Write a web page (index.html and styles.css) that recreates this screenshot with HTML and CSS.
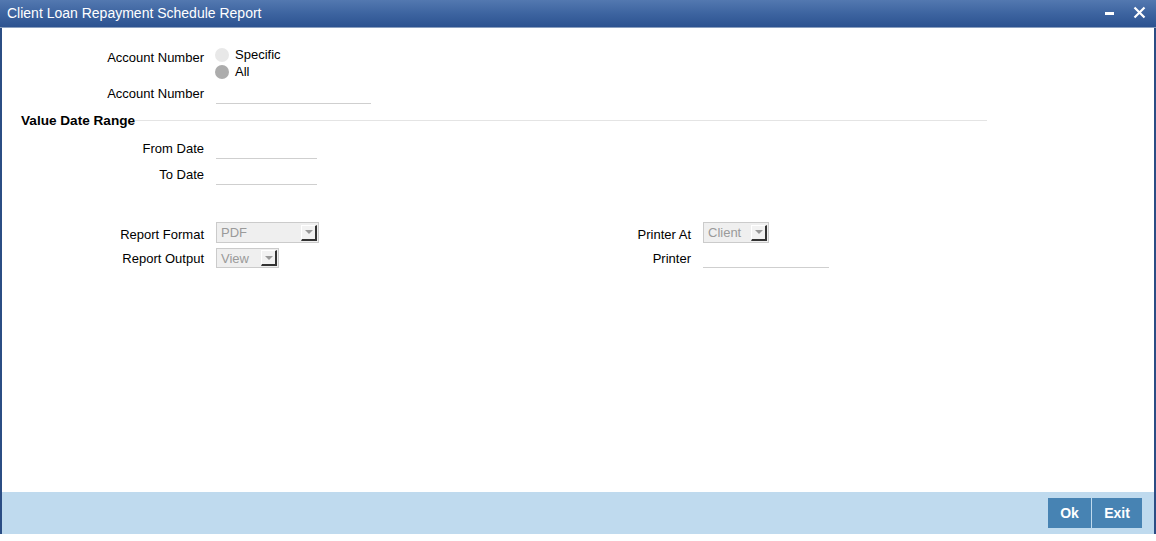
FILE: index.html
```html
<!DOCTYPE html>
<html>
<head>
<meta charset="utf-8">
<link rel="stylesheet" href="styles.css">
</head>
<body>
<div class="window">
  <div class="titlebar">
    <span class="title">Client Loan Repayment Schedule Report</span>
    <div class="tools">
      <svg class="ico" width="12" height="12" viewBox="0 0 12 12"><rect x="1" y="5" width="9" height="3" fill="#fff"/></svg>
      <svg class="ico" width="13" height="13" viewBox="0 0 13 13"><path d="M1.5 1.5 L11.5 11.5 M11.5 1.5 L1.5 11.5" stroke="#fff" stroke-width="2.2"/></svg>
    </div>
  </div>
  <div class="body">
    <div class="row r-radio">
      <label class="lbl lbl-radio">Account Number</label>
      <div class="radios">
        <div class="opt"><span class="radio"></span><span>Specific</span></div>
        <div class="opt"><span class="radio on"></span><span>All</span></div>
      </div>
    </div>
    <div class="row r-acc">
      <label class="lbl">Account Number</label>
      <div class="input w155"></div>
    </div>
    <div class="section">
      <span class="sec-title">Value Date Range</span>
      <span class="sec-line"></span>
    </div>
    <div class="row r-from">
      <label class="lbl">From Date</label>
      <div class="input w101"></div>
    </div>
    <div class="row r-to">
      <label class="lbl">To Date</label>
      <div class="input w101"></div>
    </div>
    <div class="cols">
      <div class="col left">
        <div class="row r-sel1">
          <label class="lbl">Report Format</label>
          <div class="select s103"><span class="val">PDF</span><span class="arrow"><i></i></span></div>
        </div>
        <div class="row r-sel2">
          <label class="lbl">Report Output</label>
          <div class="select s63"><span class="val">View</span><span class="arrow"><i></i></span></div>
        </div>
      </div>
      <div class="col right">
        <div class="row r-sel1">
          <label class="lbl">Printer At</label>
          <div class="select s66"><span class="val">Client</span><span class="arrow"><i></i></span></div>
        </div>
        <div class="row r-sel2">
          <label class="lbl">Printer</label>
          <div class="input w126"></div>
        </div>
      </div>
    </div>
  </div>
  <div class="footer">
    <button class="btn ok">Ok</button>
    <button class="btn exit">Exit</button>
  </div>
</div>
</body>
</html>
```

FILE: styles.css
```css
* { box-sizing: border-box; }
html, body { margin: 0; padding: 0; background: #fff; }
body { font-family: "Liberation Sans", Arial, sans-serif; font-size: 13px; color: #000; }

.window {
  width: 1156px;
  height: 534px;
  display: flex;
  flex-direction: column;
  border-left: 2px solid #2b4d84;
  border-right: 2px solid #2b4d84;
}
.titlebar {
  height: 28px;
  margin: 0 -2px;
  display: flex;
  align-items: center;
  justify-content: space-between;
  background: linear-gradient(#5378b0, #3d64a0 50%, #2c5290);
  border-bottom: 1px solid #8a9fbf;
  padding: 0 0 2px 7px;
}
.title { color: #fff; font-size: 14px; }
.tools { display: flex; align-items: center; gap: 17px; padding-right: 10px; }
.ico { display: block; }

.body { flex: 1; padding-top: 18px; }

.row { display: flex; align-items: flex-start; }
.lbl {
  width: 202px;
  margin-right: 12px;
  text-align: right;
  line-height: 20px;
  height: 20px;
}
.lbl-radio { padding-top: 2px; }
.radios { display: flex; flex-direction: column; }
.opt { display: flex; align-items: center; height: 17px; gap: 6px; }
.radio {
  width: 14px; height: 14px; border-radius: 50%;
  background: #e8e8e8; margin-left: -1px;
}
.radio.on { background: #acacac; }
.r-acc { margin-top: 4px; }
.input { height: 20px; border-bottom: 1px solid #cfcfcf; }
.w155 { width: 155px; }
.w101 { width: 101px; }
.w126 { width: 126px; }

.section {
  display: flex;
  align-items: center;
  margin: 5px 0 0 19px;
  width: 966px;
  height: 22px;
}
.sec-title { font-weight: bold; font-size: 13.6px; }
.sec-line { flex: 1; height: 1px; background: #e4e4e4; }

.r-from { margin-top: 8px; }
.r-to { margin-top: 6px; }

.cols { display: flex; margin-top: 37px; }
.col { display: flex; flex-direction: column; gap: 4px; }
.left { width: 487px; }
.r-sel1 .lbl { line-height: 25px; height: 22px; }
.r-sel2 .lbl { line-height: 22px; height: 20px; }

.select {
  height: 21px;
  background: #efefef;
  border: 1px solid #cbcbcb;
  display: flex;
  align-items: center;
  justify-content: space-between;
  padding: 0 1px 0 4px;
  color: #9a9a9a;
}
.r-sel2 .select { height: 20px; }
.s103 { width: 103px; }
.s63 { width: 63px; }
.s66 { width: 66px; }
.arrow {
  width: 16px; height: 16px;
  background: #f2f2f2;
  border-top: 1px solid #fff;
  border-left: 1px solid #fff;
  border-right: 2px solid #333;
  border-bottom: 2px solid #333;
  display: flex; align-items: center; justify-content: center;
}
.arrow i {
  width: 0; height: 0;
  border-left: 4px solid transparent;
  border-right: 4px solid transparent;
  border-top: 4px solid #999;
}

.footer {
  height: 42px;
  background: #bfdaee;
  display: flex;
  justify-content: flex-end;
  align-items: flex-start;
  padding: 6px 12px 0 0;
  gap: 1px;
}
.btn {
  height: 30px;
  border: none;
  background: #4783b3;
  color: #fff;
  font-family: "Liberation Sans", Arial, sans-serif;
  font-weight: bold;
  font-size: 14px;
  padding: 0;
}
.ok { width: 43px; }
.exit { width: 50px; }
```
